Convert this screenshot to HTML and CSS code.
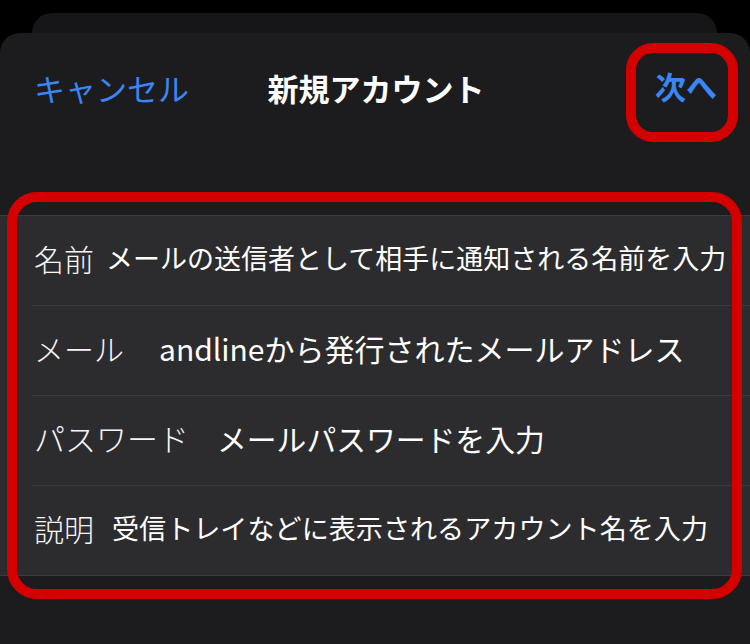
FILE: index.html
```html
<!DOCTYPE html>
<html lang="ja">
<head>
    <meta charset="UTF-8">
    <meta name="viewport" content="width=device-width, initial-scale=1.0">
    <title>新規アカウント</title>
    <link rel="stylesheet" href="styles.css">
</head>
<body>
    <div class="back-card"></div>
    <div class="sheet">
        <div class="header">
            <button class="cancel">キャンセル</button>
            <div class="title">新規アカウント</div>
            <button class="next">次へ</button>
        </div>

        <div class="group-wrap">
            <div class="group">
                <div class="row">
                    <span class="label">名前</span>
                    <span class="value value-name">メールの送信者として相手に通知される名前を入力</span>
                </div>
                <div class="row">
                    <span class="label">メール</span>
                    <span class="value value-mail">andlineから発行されたメールアドレス</span>
                </div>
                <div class="row">
                    <span class="label label-pass">パスワード</span>
                    <span class="value value-pass">メールパスワードを入力</span>
                </div>
                <div class="row">
                    <span class="label">説明</span>
                    <span class="value value-desc">受信トレイなどに表示されるアカウント名を入力</span>
                </div>
            </div>
            <div class="highlight"></div>
        </div>
    </div>
</body>
</html>
```

FILE: styles.css
```css
body {
    margin: 0;
    background-color: #000;
    font-family: "Noto Sans CJK JP", "Noto Sans", sans-serif;
    color: #f2f2f4;
    height: 644px;
    overflow: hidden;
    padding-top: 13px;
    box-sizing: border-box;
}
.back-card {
    height: 20px;
    margin: 0 33px 0 32px;
    background-color: #161618;
    border-radius: 20px 20px 0 0;
}
.sheet {
    background-color: #1c1c1e;
    border-radius: 20px 20px 0 0;
    height: 611px;
}
.header {
    height: 106px;
    padding-bottom: 5px;
    display: grid;
    grid-template-columns: 1fr auto 1fr;
    align-items: center;
}
.header button {
    font-family: inherit;
    background: none;
    border: none;
    padding: 0;
    font-size: 31px;
    line-height: 31px;
    color: #3b86f5;
    cursor: pointer;
}
.cancel {
    justify-self: start;
    margin-left: 34px;
}
.title {
    font-size: 31px;
    line-height: 31px;
    font-weight: 700;
    color: #fff;
    margin-left: 2px;
}
.header .next {
    justify-self: end;
    align-self: start;
    margin: 10px 12px 0 0;
    border: 10px solid #d40000;
    border-radius: 27px;
    padding: 17px 11px 31px 19px;
    font-weight: 700;
}
.group-wrap {
    position: relative;
    margin-top: 71px;
}
.group {
    background-color: #2c2c2e;
    border-top: 1px solid #3b3b3e;
    border-bottom: 1px solid #3b3b3e;
}
.row {
    height: 84px;
    padding-bottom: 5px;
    margin-left: 32px;
    padding-left: 2px;
    display: flex;
    align-items: center;
    border-bottom: 1px solid #3b3b3e;
    white-space: nowrap;
}
.row:last-child {
    border-bottom: none;
}
.label {
    font-size: 30px;
    line-height: 30px;
    font-weight: 300;
    color: #f6f6f8;
}
.label-pass {
    font-size: 31px;
}
.value {
    font-size: 28px;
    line-height: 30px;
    color: #fff;
}
.value-name {
    font-size: 27px;
    margin-left: 12px;
}
.value-mail {
    font-size: 30px;
    margin-left: 35px;
}
.value-pass {
    font-size: 29.8px;
    margin-left: 28px;
}
.value-desc {
    font-size: 27.1px;
    margin-left: 18px;
}
.highlight {
    position: absolute;
    top: -23px;
    bottom: -23px;
    left: 7px;
    right: 8px;
    border: 10px solid #d40000;
    border-radius: 30px;
    pointer-events: none;
}
```
